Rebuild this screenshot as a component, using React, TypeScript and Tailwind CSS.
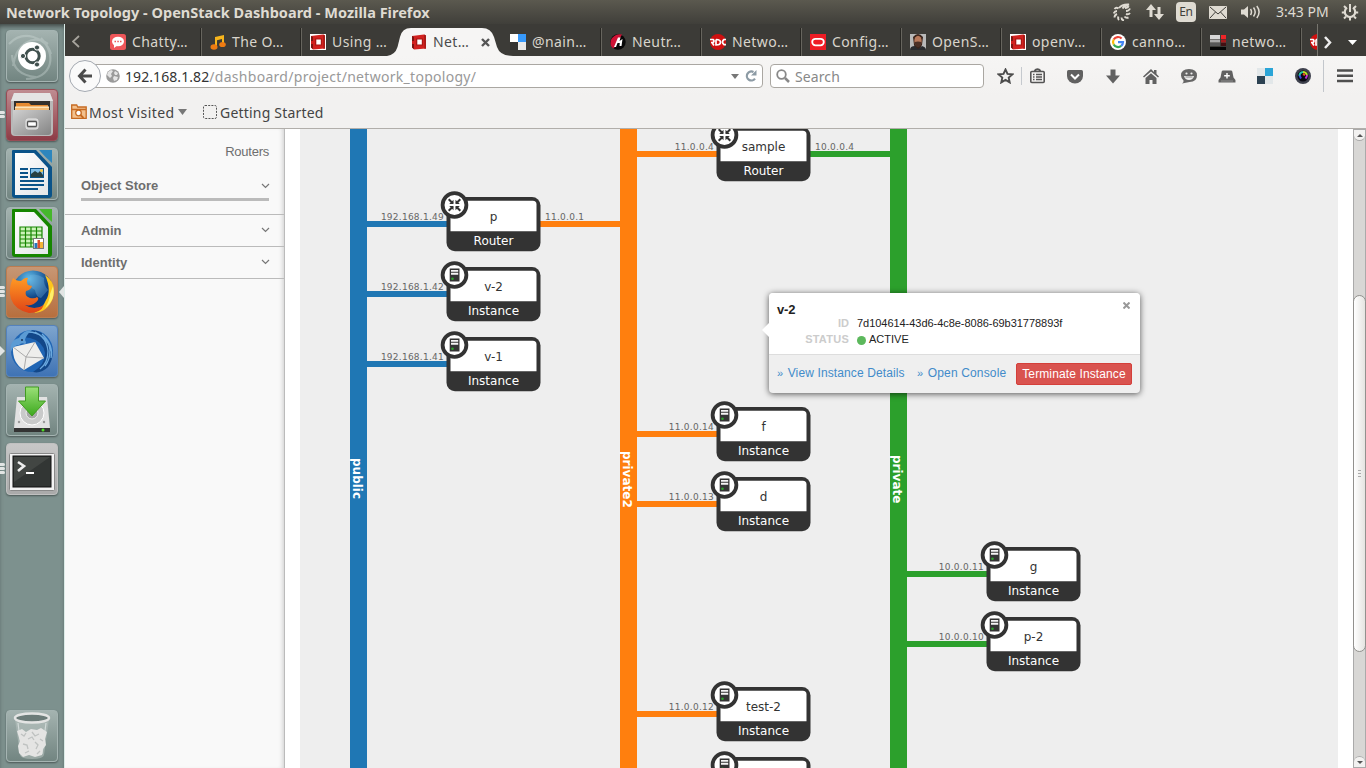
import React from "react";

const ui = "font-['Noto_Sans','Open_Sans',sans-serif]";

/* ---------- top panel ---------- */
function TopPanel() {
  return (
    <header className={`flex h-6 items-center bg-linear-to-b from-[#5b594f] to-[#403f3a] text-[#dfdbd2] ${ui}`}>
      <h1 className="pl-1.5 text-[14.5px] leading-6 font-bold tracking-[0.02px] whitespace-nowrap">Network Topology - OpenStack Dashboard - Mozilla Firefox</h1>
      <svg className="ml-auto" width="18" height="18" viewBox="0 0 18 18" fill="none" stroke="#dfdbd2">
        <g strokeWidth="1.900">
          <path d="M6 5Q9 1 16 1.500Q11 3 9.500 5.500M12 5q3 0 3.500-2M13 8q3 0 4-2.500M13 11q2.500 1 4-1M11.500 13.500q1.500 2 4 1M8.500 14.500q0 2.500 2.500 3M5.500 13.500q-1 2 .5 3.500M4 11q-2.500 1-2.500 3.500M4 8Q1.500 8 .7 10.500M5.500 5.500Q3 4 1.500 6" />
        </g>
      </svg>
      <svg className="ml-[15px]" width="18" height="18" viewBox="0 0 18 18" fill="#dfdbd2">
        <path d="M5 1l5 6H6.500v7h-3V7H0zM13 17l-5-6h3.500V4h3v7H18z" />
      </svg>
      <span className="ml-3 flex h-5 w-5 items-center justify-center rounded-sm bg-[#dfdbd2] text-[12px] tracking-tight text-[#403f3a]">En</span>
      <svg className="ml-[13px]" width="18" height="13" viewBox="0 0 18 13">
        <rect width="18" height="13" rx="1" fill="#dfdbd2" />
        <path d="M1 1l8 7 8-7M1 12l5.500-6M17 12l-5.500-6" stroke="#403f3a" fill="none" />
      </svg>
      <svg className="ml-[13px]" width="21" height="16" viewBox="0 0 21 16" fill="none" stroke="#dfdbd2" strokeWidth="1.500">
        <path d="M1 5.500h3L8 2v12l-4-3.500H1z" fill="#dfdbd2" stroke="none" />
        <path d="M10.500 5q2 3 0 6M13.500 3.500q3.400 4.500 0 9M16.800 2q4.600 6 0 12" />
      </svg>
      <span className="ml-[15px] w-[53px] text-[14px] leading-6 tracking-[0.03px] whitespace-nowrap">3:43 PM</span>
      <svg className="mr-[7px] ml-3" width="18" height="18" viewBox="0 0 18 18" fill="none" stroke="#dfdbd2">
        <path d="M6 4.600A5.200 5.200 0 1 0 12 4.600" strokeWidth="2.200" />
        <path d="M9 1v8" strokeWidth="2" />
        <path d="M3 3l2 2M15 3l-2 2M.8 9.500h2.500M14.700 9.500h2.500M3 15.500l2-2M15 15.500l-2-2M9 15v2.500" strokeWidth="2" />
      </svg>
    </header>
  );
}

/* ---------- launcher ---------- */
const launcherArt: Record<string, React.ReactNode> = {
  ubuntu: (
    <>
      <path d="M7 36C10 15 26 3 42 14M20 49C47 48 51 25 35 8M3 14C17-1 40 7 45 24M6 25q1 20 24 22" fill="none" stroke="#d4dfdd" strokeWidth="2.200" opacity=".35" />
      <circle cx="26" cy="26" r="14" fill="#fff" />
      <circle cx="26.500" cy="26" r="6.700" fill="none" stroke="#40504e" strokeWidth="3" />
      <g fill="#40504e" stroke="#fff" strokeWidth="1"><circle cx="17" cy="26" r="2.600" /><circle cx="31" cy="17.500" r="2.600" /><circle cx="31" cy="34.500" r="2.600" /></g>
    </>
  ),
  files: (
    <>
      <path d="M8 4h36l3 8v31q0 4-4 4H9q-4 0-4-4V12z" fill="#b8b8b8" /><path d="M8 4h36l3 8H5z" fill="#e4e4e4" />
      <path d="M8 12h36v10H8z" fill="#33302d" />
      <path d="M10 14h13l2 2h17v7H10z" fill="#e58a31" /><path d="M9 18h34v4H9z" fill="#f3bb76" /><path d="M9 17.500h34v1.300H9z" fill="#fff1cf" />
      <path d="M7 21h38v22q0 3-3 3H10q-3 0-3-3z" fill="url(#steel)" />
      <rect x="20" y="30" width="12" height="10" rx="2" fill="#c9c9c9" stroke="#e8e8e8" />
      <rect x="21.500" y="32.500" width="9" height="5" rx="1" fill="#fff" stroke="#555" strokeWidth="1.300" />
    </>
  ),
  writer: (
    <>
      <path d="M6 3q0-1 1-1h23l16 17v28q0 3-3 3H9q-3 0-3-3z" fill="#0a5389" />
      <path d="M9 5h19l14 15v27H9z" fill="url(#paper)" />
      <path d="M33 2h13v13q-7-6-13-13z" fill="#2d86bd" />
      <path d="M14 21h8M14 25h8M14 29h8M14 33h24M14 37h24M14 41h18" stroke="#0a5389" strokeWidth="2" />
      <rect x="24.500" y="20.500" width="13" height="9" fill="#80bde6" stroke="#0a5389" /><path d="M25 29v-3l4-3 3 2 2-2 3 4v2z" fill="#263f42" /><circle cx="35.500" cy="22.500" r="1.500" fill="#f6c743" />
    </>
  ),
  calc: (
    <>
      <path d="M6 3q0-1 1-1h23l16 17v28q0 3-3 3H9q-3 0-3-3z" fill="#168600" />
      <path d="M9 5h19l14 15v27H9z" fill="url(#paper)" />
      <path d="M33 2h13v13q-7-6-13-13z" fill="#46b72c" />
      <path d="M14 20h22v20H14z" fill="#cdf3ba" /><path d="M14 20h22v20H14zM14 24h22M14 28h22M14 32h22M14 36h22M19.500 20v20M25 20v20M30.500 20v20" fill="none" stroke="#168600" strokeWidth="1.200" />
      <rect x="27.500" y="31.500" width="10" height="10" fill="#fff" stroke="#777" /><path d="M28.500 36h3v5h-3z" fill="#2776bd" /><path d="M31.500 33h2.500v8h-2.500z" fill="#e1512d" /><path d="M34 35h3v6h-3z" fill="#f3b437" />
    </>
  ),
  firefox: (
    <>
      <circle cx="27" cy="25" r="20.500" fill="url(#globe)" />
      <path d="M24 9q7-2 14 3-1 6 4 12l-7 8q-5-1-6-8-7-2-5-15z" fill="#79b8e0" opacity=".35" />
      <path d="M39 9q12 8 8 23-5 14-19 15 9-5 12-13 6-9-1-25z" fill="#ffc51c" /><path d="M47 20q3 14-8 22 5-8 5-14z" fill="#fff06a" />
      <path d="M7 12q3 3 8 3 4-4 7-3-2 4 0 7l4 1q-1 4-6 5-2 5 4 7 5 1 7-1 2 1 1 3-5 7-13 5 9 6 19 0-3 8-15 8Q9 44 5 33 2 22 7 12z" fill="url(#fox)" />
    </>
  ),
  thunderbird: (
    <>
      <circle cx="26" cy="26" r="21" fill="#1f65b4" />
      <path d="M14 10Q31-1 42 15q9 14 0 27-7 7-15 5 12-7 12-19-2-12-15-15-4 0-10-3z" fill="#124789" />
      <path d="M22 7q18 0 20 19 0 12-8 18M29 7q15 8 15 18t-5 16M36 9q12 11 9 24" stroke="#6ba9df" fill="none" strokeWidth="1.300" />
      <path d="M7 22l22-5 9 16-20 12q-12-7-11-23z" fill="#eeeeec" /><path d="M7 22l13 10 9-15M18 45l2-13 18 1" stroke="#aaa" fill="none" />
      <path d="M5 27Q3 15 13 13q4-8 13-8-6 5-7 10 2 3 0 4-3-2-6 1-6 0-8 7z" fill="#5b9bd4" /><circle cx="16" cy="15" r="1" fill="#152f55" />
    </>
  ),
  installer: (
    <>
      <path d="M11 13h30l3 31v3H8v-3z" fill="#e2e2e2" /><path d="M8 44h36v4H8z" fill="#333" /><circle cx="37" cy="46" r="1.500" fill="#4ddc26" />
      <circle cx="26" cy="29" r="12" fill="#c9caca" stroke="#fff" /><circle cx="26" cy="29" r="6" fill="#a8aaa8" stroke="#eee" />
      <path d="M19.500 3h13v14h7L26 32 12.500 17h7z" fill="url(#green)" stroke="#419b20" />
      <g fill="#999"><circle cx="13" cy="38" r="1.200" /><circle cx="38" cy="38" r="1.200" /></g>
    </>
  ),
  terminal: (
    <>
      <rect x="3.500" y="10.500" width="45" height="37" rx="1" fill="#f3f3f3" stroke="#888" />
      <rect x="7" y="13" width="38" height="31" fill="#323634" stroke="#111" /><path d="M8 14h36L8 39z" fill="#606361" opacity=".35" />
      <path d="M12 19l6 4-6 5" fill="none" stroke="#eee" strokeWidth="2.600" /><path d="M20 30h8" stroke="#fff" strokeWidth="2" />
    </>
  ),
  trash: (
    <>
      <path d="M9 9l5 36q1 4 12 4t12-4l5-36z" fill="#b8c2c0" opacity=".55" /><path d="M12 13l4 31M40 13l-4 31" stroke="#e4ebea" strokeWidth="1.200" opacity=".7" />
      <ellipse cx="26" cy="8" rx="17" ry="4.500" fill="#6c7c79" stroke="#e3e4e3" strokeWidth="2.500" />
      <path d="M11 21l5-2 4 3 5-3 6 1 4-2 6 4-2 7 1 6-3 4-1 6-7 2-6-2-6 2-4-4-1-7 2-5z" fill="#e4e4e3" />
      <path d="M15 24l3 2 2-3M26 22l3 4 4-2M17 34l4 1 1 4M29 32l3 3-2 4M22 29l4-2 2 3M34 29l3 2M19 43l4-2M31 44l3-3" stroke="#bfc2c1" fill="none" strokeWidth="1.300" />
    </>
  ),
};

function Defs() {
  return (
    <svg className="absolute h-0 w-0">
      <defs>
        <linearGradient id="steel" x2="1" y2="1"><stop stopColor="#d0d0d0" /><stop offset="1" stopColor="#848484" /></linearGradient>
        <linearGradient id="paper" x2="1" y2="1"><stop stopColor="#fff" /><stop offset="1" stopColor="#e3e6e8" /></linearGradient>
        <linearGradient id="fox" x2="0" y2="1"><stop stopColor="#ff9a24" /><stop offset="1" stopColor="#df4216" /></linearGradient>
        <linearGradient id="green" x2="0" y2="1"><stop stopColor="#9be078" /><stop offset="1" stopColor="#3ca91d" /></linearGradient>
        <radialGradient id="globe" cx=".4" cy=".2"><stop stopColor="#62bdea" /><stop offset="1" stopColor="#0b3f82" /></radialGradient>
      </defs>
    </svg>
  );
}

const glass = "bg-linear-to-b from-[#a4b3b0] to-[#728581] border-[#a5b4b2]";
const launcher = [
  { id: "ubuntu", cls: glass, pips: 0 },
  { id: "files", cls: "bg-linear-to-b from-[#bf8c91] to-[#8d3b46] border-[#984c55]", pips: 2 },
  { id: "writer", cls: glass, pips: 0 },
  { id: "calc", cls: glass, pips: 0 },
  { id: "firefox", cls: "bg-linear-to-b from-[#c79774] to-[#b76f3e] border-[#bc7c50]", pips: 3 },
  { id: "thunderbird", cls: "bg-linear-to-b from-[#7ea5ce] to-[#3f73b5] border-[#5482bc]", pips: 1 },
  { id: "installer", cls: glass, pips: 0 },
  { id: "terminal", cls: "bg-linear-to-b from-[#c7c7c7] to-[#aaa] border-[#c0c0c0]", pips: 3 },
];

function Tile({ id, cls, pips }: { id: string; cls: string; pips: number }) {
  return (
    <div className="relative pl-1.5">
      <div className={`flex h-[52px] w-[52px] items-center justify-center rounded-[4px] border shadow-[0_1px_2px_rgba(0,0,0,0.4)] ${cls}`}>
        <svg className="shrink-0" width="52" height="52" viewBox="0 0 52 52">{launcherArt[id]}</svg>
      </div>
      {pips > 1 && (
        <div className={`absolute left-0 flex flex-col gap-px ${pips === 3 ? "top-[20px]" : "top-[22px]"}`}>
          {Array.from({ length: pips }, (_, i) => <i key={i} className="block h-[3px] w-[5px] rounded-r-full bg-[#e2e5e4]" />)}
        </div>
      )}
      {pips === 1 && <svg className="absolute top-[21px] left-0" width="5" height="10"><path d="M0 0l5 5-5 5z" fill="#e2e5e4" /></svg>}
      {id === "firefox" && <svg className="absolute top-[20px] left-[59px]" width="5" height="12"><path d="M5 0L0 6l5 6z" fill="#e2e5e4" /></svg>}
    </div>
  );
}

function Launcher() {
  return (
    <nav className="flex w-[65px] shrink-0 flex-col gap-[7px] border-r border-[#dcebe7] bg-[#7d918e] pt-1.5 pb-1.5 shadow-[inset_0_4px_5px_-2px_#3b4341]">
      {launcher.map((t) => <Tile key={t.id} {...t} />)}
      <div className="mt-auto"><Tile id="trash" cls={glass} pips={0} /></div>
    </nav>
  );
}

/* ---------- tabs ---------- */
const redBox = (
  <>
    <path d="M1 2l12-1.500 2 1v13L3 15.500l-2-2z" fill="#d2211f" /><path d="M1 2l2 1v4H1zM1 10h2v5l-2-1.500z" fill="#7d1512" /><path d="M13 .5l2 1v13l-1.500.5z" fill="#a91b18" />
    <path d="M5 4.500h7v7H5z" fill="#a81714" /><path d="M6.300 5.500h4.500v5H6.300z" fill="#fff" />
  </>
);
const favicons: Record<string, React.ReactNode> = {
  chat: <><rect width="16" height="16" rx="2.500" fill="#ee5659" /><ellipse cx="8" cy="7.500" rx="6" ry="4.800" fill="#fff" /><path d="M4 10v4l4-3z" fill="#fff" /><path d="M4.500 7.500h1.500M7.300 7.500h1.500M10 7.500h1.500" stroke="#ee5659" strokeWidth="1.500" /></>,
  music: <><path d="M5 3l9-2v9.500h-2V5L7 6.200V13H5z" fill="#f7b51c" /><ellipse cx="4" cy="13" rx="3.500" ry="2.700" fill="#ee7b12" /><ellipse cx="12.500" cy="10.500" rx="3.300" ry="2.600" fill="#ee7b12" /></>,
  red: <><rect width="16" height="16" fill="#fff" />{redBox}</>,
  redActive: redBox,
  delicious: <><path d="M0 0h8v8H0z" fill="#fff" /><path d="M8 0h8v8H8z" fill="#3799fb" /><path d="M0 8h8v8H0z" fill="#333" /><path d="M8 8h8v8H8z" fill="#e8e8e8" /></>,
  neutron: <><circle cx="8" cy="8" r="7.700" fill="#080808" /><path d="M1 12Q-1 5 5 1.500q4-2 7-1L5 13l-2 1.500z" fill="#cf1235" /><path d="M4 13L8 3.500h2.500l-1 3.500 3-2-1 7H9.500l.3-3L7.500 9 6 13z" fill="#fff" /></>,
  rdo: <><circle cx="8" cy="8" r="8" fill="#cf1010" /><path d="M0 5.500h3q2 1.500 0 3H1M2 8.500l2 3M6 5.500v5.500q4.500 0 4.500-2.700T6 5.500M16 5.500h-2q-3 2.500 0 5.200h2" stroke="#fff" strokeWidth="1.700" fill="none" /></>,
  oracle: <><path d="M0 0h16v16H0z" fill="#ee1c25" /><rect x="2.200" y="4.800" width="11.600" height="6.500" rx="3.250" fill="none" stroke="#fff" strokeWidth="1.800" /></>,
  face: <><path d="M0 0h16v16H0z" fill="#b8b9b9" /><path d="M3 3q5-6 10 0l-1 8-3 5H6l-2-5z" fill="#3a241b" /><ellipse cx="8" cy="7" rx="3.700" ry="5.200" fill="#b7795b" /><path d="M4.500 8Q8 7 11.500 8 11 13 8 13T4.500 8z" fill="#4b3026" /><path d="M0 16q0-4 5-4l3 3 4-3q4 1 4 4z" fill="#292b2e" /></>,
  google: <><circle cx="8" cy="8" r="8" fill="#fff" /><g fill="none" strokeWidth="2.200"><path d="M11.600 4.500A5 5 0 0 0 3.700 5.500" stroke="#ea4335" /><path d="M3.700 5.500a5 5 0 0 0 0 5" stroke="#fbbc05" /><path d="M3.700 10.500a5 5 0 0 0 7.500 1.400" stroke="#34a853" /><path d="M11.200 11.900A5 5 0 0 0 13 8.200H8" stroke="#4285f4" /></g></>,
  bars: <><path d="M0 1h10v4H0z" fill="#d7d7d7" /><path d="M11 1h5v4h-5z" fill="#ef2528" /><path d="M0 5.500h10v3H0z" fill="#aaa" /><path d="M11 5.500h5v3h-5z" fill="#a51b1d" /><path d="M0 9h10v3H0z" fill="#575757" /><path d="M11 9h5v3h-5z" fill="#431013" /><path d="M0 13h16v3H0z" fill="#050505" /></>,
};
const tabs: [string, string][] = [
  ["chat", "Chatty…"], ["music", "The O…"], ["red", "Using …"], ["redActive", "Net…"], ["delicious", "@nain…"], ["neutron", "Neutr…"],
  ["rdo", "Netwo…"], ["oracle", "Config…"], ["face", "OpenS…"], ["red", "openv…"], ["google", "canno…"], ["bars", "netwo…"], ["rdo", ""],
];

function Tabs() {
  return (
    <div className={`flex h-8 bg-[#3c3b37] text-[14px] text-[#d9d5cc] ${ui}`}>
      <div className="flex w-[37px] shrink-0 items-center pt-0.5 pl-[7px]">
        <svg width="8" height="14" fill="none" stroke="#a7a49d" strokeWidth="1.800"><path d="M7 2L1 7.500 7 13" /></svg>
      </div>
      <div className="flex min-w-0 flex-1 overflow-hidden">
        {tabs.map(([icon, label], i) => {
          const active = i === 3;
          const divider = i !== 2 && i !== 3;
          return (
            <div key={i} className={`relative flex h-8 w-[100px] shrink-0 items-center pt-1 pl-2 ${active ? "z-10 pl-[9px] text-[#4b4b4b]" : ""}`}>
              {active && (
                <svg className="absolute top-1 left-[-15px]" width="126" height="28" viewBox="0 0 126 28">
                  <path d="M0 28Q8 27 10.500 19L13 9Q15 0 24 0h71q9 0 12 9l3 10q3 9 16 9z" fill="#f6f5f4" />
                </svg>
              )}
              <svg className="relative shrink-0" width="16" height="16" viewBox="0 0 16 16">{favicons[icon]}</svg>
              <span className="relative -top-px ml-1.5 tracking-[0.4px] whitespace-nowrap">{label}</span>
              {active && <svg className="absolute top-[14px] left-[79px]" width="9" height="9" stroke="#555" strokeWidth="2.400"><path d="M1 1l7 7M8 1L1 8" /></svg>}
              {divider && <i className="absolute right-0 bottom-0 h-7 w-[2px] border-l border-[#272622] bg-[#67655e]" />}
            </div>
          );
        })}
      </div>
      <div className="flex w-[49px] shrink-0 items-center border-l border-[#77756e] pt-1 pl-[6px]">
        <svg width="8" height="13" fill="none" stroke="#eee" strokeWidth="2.500"><path d="M1 1l5 5.500L1 12" /></svg>
        <svg className="ml-4" width="9" height="5"><path d="M0 0h9L4.500 5z" fill="#fff" /></svg>
      </div>
    </div>
  );
}

/* ---------- navigation ---------- */
const tool = "flex w-[38px] shrink-0 justify-center";

function NavBar() {
  return (
    <div className={`flex h-10 items-center bg-linear-to-b from-[#f6f5f4] to-[#f2f1f0] ${ui}`}>
      <div className="z-10 ml-1 flex h-8 w-8 shrink-0 items-center justify-center rounded-full border border-[#a4a9b1] bg-[#fafafa]">
        <svg width="16" height="16" fill="none" stroke="#4c4c4c" strokeWidth="3"><path d="M8.500 1.500L2.500 8l6 6.500M3 8h12" /></svg>
      </div>
      <div className="-ml-4 flex h-6 w-[678px] shrink-0 items-center rounded-sm border border-[#aaa7a2] bg-white pl-5">
        <svg width="14" height="14" viewBox="0 0 14 14"><circle cx="7" cy="7" r="6.800" fill="#9a9a9a" /><path d="M2 3l3-2 2 1-2 3 1 2-2 2-2-2-1-1zM9 2l3 2-1 2H9L8 4zM8 7l4 1-1 3-3 1-1-3z" fill="#e4e4e4" /></svg>
        <span className="ml-[5px] text-[14px] tracking-[0.29px] whitespace-nowrap text-[#999]"><b className="font-normal tracking-[0.08px] text-[#333]">192.168.1.82</b>/dashboard/project/network_topology/</span>
        <svg className="ml-auto" width="8" height="5"><path d="M0 0h8L4 5z" fill="#777" /></svg>
        <svg className="mr-[5px] ml-1.5" width="12" height="12" viewBox="0 0 12 12"><path d="M10 8.700A4.500 4.500 0 1 1 8.500 2" fill="none" stroke="#8d9ba5" strokeWidth="2.200" /><path d="M11.500 0v5.500H6z" fill="#8d9ba5" /></svg>
      </div>
      <div className="ml-[7px] flex h-6 w-[214px] shrink-0 items-center rounded-sm border border-[#aaa7a2] bg-white pl-[5px]">
        <svg width="14" height="14" fill="none" stroke="#888"><circle cx="5.500" cy="5.500" r="4.300" strokeWidth="1.800" /><path d="M9 9l4 4" strokeWidth="2.500" /></svg>
        <span className="ml-[5px] text-[14px] tracking-[0.1px] text-[#888]">Search</span>
      </div>
      <div className="flex w-[37px] shrink-0 items-center pl-[13px]">
        <svg width="17" height="16" viewBox="0 0 17 16"><path d="M8.500 1.500l2 4.400 4.800.5-3.600 3.200 1 4.800-4.200-2.500-4.200 2.500 1-4.800-3.600-3.200 4.800-.5z" fill="none" stroke="#4c4c4c" strokeWidth="1.900" /></svg>
      </div>
      <div className="h-[18px] w-px shrink-0 bg-[#c5c9ce]" />
      <div className="flex w-[34px] shrink-0 pl-2">
        <svg width="15" height="16" fill="none" stroke="#555"><path d="M4.500 3q3-3.500 6 0" strokeWidth="2" /><rect x=".8" y="3.500" width="13.400" height="11" rx="1" strokeWidth="1.600" /><path d="M3 6.500h1.500M3 9h1.500M3 11.500h1.500M6 6.500H12M6 9H12M6 11.500H12" strokeWidth="1.400" /></svg>
      </div>
      <div className={tool}><svg width="16" height="15"><path d="M1.500 1h13Q16 1 16 2.500V7a8 7.500 0 0 1-16 0V2.500Q0 1 1.500 1z" fill="#616161" /><path d="M4 5.500l4 4 4-4" fill="none" stroke="#fff" strokeWidth="2" /></svg></div>
      <div className={tool}><svg width="14" height="15"><path d="M4.500 0.500h5v6H14l-7 8-7-8h4.500z" fill="#616161" /></svg></div>
      <div className={tool}><svg width="16" height="15" fill="#616161"><path d="M0 7.500L8 0l3 3V1h2.500v4L16 7.500l-1 1L8 2.500 1 8.500z" /><path d="M2.500 9L8 4.200 13.500 9v6H9.500v-4h-3v4h-4z" /></svg></div>
      <div className={tool}><svg width="16" height="16"><path d="M8 1q8 0 8 6.500T8.500 14L1 15.500q2-1 1.500-3Q0 10 0 7.500 0 1 8 1z" fill="#666" /><circle cx="5.500" cy="5.500" r="1.100" fill="#eee" /><circle cx="10.500" cy="5.500" r="1.100" fill="#eee" /><path d="M3 8h10q-1 4-5 4T3 8z" fill="#eee" /><path d="M4.500 9h7" stroke="#777" strokeWidth=".8" /></svg></div>
      <div className={tool}><svg width="18" height="13"><path d="M5 .5h8q1 0 1.300 1L15.500 7.500q2.500 2 2 5H.5q-.5-3 2-5L3.700 1.500Q4 .5 5 .5z" fill="#616161" /><path d="M9 3v5.500M6.200 5.700h5.600" stroke="#fff" strokeWidth="1.400" /><path d="M3 11h12" stroke="#999" strokeWidth=".8" /></svg></div>
      <div className={tool}><svg width="16" height="16"><path d="M0 0h8v8H0zM8 8h8v8H8z" fill="#e2e7e9" /><path d="M8 0h8v8H8z" fill="#2ba5d7" /><path d="M0 8h8v8H0z" fill="#2c4252" /></svg></div>
      <div className={tool}><svg width="16" height="16" fill="none" strokeWidth="2"><circle cx="8" cy="8" r="8" fill="#3e414d" stroke="none" /><circle cx="8" cy="8" r="5.500" fill="#080812" stroke="none" /><path d="M4.500 8q0-3.500 3.500-4" stroke="#23c5a1" /><path d="M8 4q3 0 4 3" stroke="#b6df25" /><path d="M12 7q0 2-1.500 3.500" stroke="#c133d4" /><path d="M4.500 7.500l1.500 3" stroke="#3845de" /><path d="M8 6l2 1" stroke="#f2482b" /></svg></div>
      <div className="ml-px h-8 w-px shrink-0 bg-[#c3c7cc]" />
      <svg className="ml-[13px] shrink-0" width="16" height="14" stroke="#4f4f4f" strokeWidth="2.400"><path d="M0 1.500h16M0 6.700h16M0 12h16" /></svg>
    </div>
  );
}

function Bookmarks() {
  return (
    <div className={`flex h-[33px] items-center border-b border-[#b1aeaa] bg-[#f2f1f0] pl-1.5 text-[14px] text-[#444] ${ui}`}>
      <svg width="16" height="16" fill="none" stroke="#c66a21"><path d="M.7 14.300V1h5l1 2h8.500v11.300zM.7 5.500H15" fill="#f3c18d" strokeWidth="1.300" /><circle cx="7.500" cy="9" r="2.800" fill="#fff" strokeWidth="1.300" /><path d="M9.500 11l3 3" strokeWidth="1.800" /></svg>
      <span className="ml-0.5 w-[86px] tracking-[0.43px] whitespace-nowrap">Most Visited</span>
      <svg className="ml-[3px]" width="9" height="6"><path d="M0 0h9L4.500 6z" fill="#777" /></svg>
      <svg className="ml-4" width="14" height="14"><rect x=".5" y=".5" width="13" height="13" rx="1.500" fill="none" stroke="#555" strokeDasharray="2 1.200" /></svg>
      <span className="ml-[3px] tracking-[0.2px] whitespace-nowrap">Getting Started</span>
    </div>
  );
}

/* ---------- sidebar ---------- */
const Chevron = () => <svg className="-mr-px mb-px" width="9" height="6" fill="none" stroke="#777" strokeWidth="1.200"><path d="M1 1l3.500 3.500L8 1" /></svg>;

function Sidebar() {
  return (
    <aside className="flex w-[220px] shrink-0 flex-col border-r border-[#bbb] bg-[#f9f9f9] font-['Liberation_Sans',sans-serif] text-[13px] text-[#6e6e6e] shadow-[inset_-4px_0_5px_-3px_rgba(0,0,0,0.18)]">
      <div className="flex h-[45px] items-center justify-end pt-px pr-[15px] tracking-[-0.25px]">Routers</div>
      <div className="mr-[15px] ml-4 flex h-[27px] items-center justify-between border-b-3 border-[#bbb]">
        <b>Object Store</b><Chevron />
      </div>
      <div className="mt-[13px] flex h-8 items-center justify-between border-t border-[#bbb] pr-[15px] pl-4"><b>Admin</b><Chevron /></div>
      <div className="flex h-[33px] items-center justify-between border-y border-[#bbb] pr-[15px] pl-4"><b>Identity</b><Chevron /></div>
    </aside>
  );
}

/* ---------- topology ---------- */
const colors = { blue: "bg-[#1f77b4]", orange: "bg-[#ff7f0e]", green: "bg-[#2ca02c]" };
type Net = keyof typeof colors;
type NodeT = { name: string; router?: boolean; x: number; y: number; net: Net; ip: string; rnet?: Net; rip?: string };

const networks: { name: string; x: number; net: Net }[] = [
  { name: "public", x: 50, net: "blue" },
  { name: "private2", x: 320, net: "orange" },
  { name: "private", x: 590, net: "green" },
];
const nodes: NodeT[] = [
  { name: "sample", router: true, x: 337, y: -2, net: "orange", ip: "11.0.0.4", rnet: "green", rip: "10.0.0.4" },
  { name: "p", router: true, x: 67, y: 68, net: "blue", ip: "192.168.1.49", rnet: "orange", rip: "11.0.0.1" },
  { name: "v-2", x: 67, y: 138, net: "blue", ip: "192.168.1.42" },
  { name: "v-1", x: 67, y: 208, net: "blue", ip: "192.168.1.41" },
  { name: "f", x: 337, y: 278, net: "orange", ip: "11.0.0.14" },
  { name: "d", x: 337, y: 348, net: "orange", ip: "11.0.0.13" },
  { name: "g", x: 607, y: 418, net: "green", ip: "10.0.0.11" },
  { name: "p-2", x: 607, y: 488, net: "green", ip: "10.0.0.10" },
  { name: "test-2", x: 337, y: 558, net: "orange", ip: "11.0.0.12" },
  { name: "", x: 337, y: 628, net: "orange", ip: "" },
];

function NodeFrame({ router }: { router?: boolean }) {
  return (
    <svg className="absolute top-[-7px] left-[-7px]" width="104" height="64" viewBox="0 0 104 64">
      <rect x="6.500" y="7" width="94" height="54.200" rx="8.500" fill="#333" />
      <path d="M10.500 41.300V14.500q0-3.700 3.700-3.700h78.600q3.700 0 3.700 3.700v26.800z" fill="#fff" />
      <circle cx="14.500" cy="15" r="11.900" fill="#fff" stroke="#333" strokeWidth="3.800" />
      {router ? (
        <g fill="#333" stroke="#333">
          <path d="M8.700 9.200l4 4M20.300 9.200l-4 4M8.700 20.800l4-4M20.300 20.800l-4-4" strokeWidth="2" />
          <path d="M13.500 9.700V14H9.200zM15.500 9.700V14h4.300zM13.500 20.300V16H9.200zM15.500 20.300V16h4.300z" stroke="none" transform="rotate(0 14.500 15)" />
        </g>
      ) : (
        <>
          <path d="M9.700 8.500h9.800v13H9.700z" fill="#333" />
          <path d="M11 10h7.200v1.700H11zM11 12.800h7.200v1.900H11z" fill="#f4f4f4" />
          <circle cx="12.500" cy="18.700" r="1.300" fill="#2ca02c" />
        </>
      )}
    </svg>
  );
}

function TopologyNode({ n }: { n: NodeT }) {
  return (
    <div className="absolute flex" style={{ left: n.x, top: n.y }}>
      <div className="w-20 pt-[14px]">
        <div className="h-[10px] pr-[3px] text-right text-[9px] leading-[13px] tracking-[0.25px] text-[#666]">{n.ip}</div>
        <div className={`h-1.5 ${colors[n.net]}`} />
      </div>
      <div className="relative flex h-[54px] w-[94px] flex-col pt-1 text-center text-[12px]">
        <NodeFrame router={n.router} />
        {n.name && (
          <>
            <div className="relative h-[30px] pr-px leading-[32px] text-[#333]">{n.name}</div>
            <div className="relative pr-px leading-[20px] text-white">{n.router ? "Router" : "Instance"}</div>
          </>
        )}
      </div>
      {n.rnet && (
        <div className="-ml-px w-20 pt-[14px]">
          <div className="h-[10px] pl-[5px] text-[9px] leading-[13px] tracking-[0.25px] text-[#666]">{n.rip}</div>
          <div className={`h-1.5 ${colors[n.rnet]}`} />
        </div>
      )}
    </div>
  );
}

function Popup() {
  return (
    <div className="absolute top-[164px] left-[469px] flex h-[100px] w-[371px] flex-col rounded-[4px] bg-[#efefef] font-['Liberation_Sans',sans-serif] shadow-[0_1px_6px_rgba(0,0,0,0.65)]">
      <svg className="absolute top-[29px] left-[-7px]" width="8" height="16"><path d="M8 0L0 8l8 8z" fill="#fff" /></svg>
      <div className="flex h-[62px] flex-col rounded-t-[4px] border-b border-[#ddd] bg-white pt-[9px] pl-2 text-[11px] text-[#222]">
        <div className="flex h-[13px] items-center justify-between pr-[10px]">
          <b className="pt-[3px] text-[13px] tracking-[-0.2px]">v-2</b>
          <svg className="-mt-1.5" width="7" height="7" stroke="#999" strokeWidth="2"><path d="M.5.5l6 6M6.500.5l-6 6" /></svg>
        </div>
        <div className="flex h-4 items-center"><b className="w-[72px] text-right text-[#ccc]">ID</b><span className="ml-2 tracking-[-0.040px]">7d104614-43d6-4c8e-8086-69b31778893f</span></div>
        <div className="flex h-4 items-center"><b className="w-[72px] text-right tracking-[0.25px] text-[#ccc]">STATUS</b><i className="mt-[3px] ml-2 h-[9px] w-[9px] rounded-full bg-[#5cb85c]" /><span className="ml-[3px]">ACTIVE</span></div>
      </div>
      <div className="flex flex-1 items-center pr-2 pl-2 text-[12px] text-[#428bca]">
        <span className="-mt-0.5 w-[140px] tracking-[0.12px] whitespace-nowrap"><small className="mr-px text-[11px]">»</small> View Instance Details</span>
        <span className="-mt-0.5 tracking-[0.15px] whitespace-nowrap"><small className="mr-px text-[11px]">»</small> Open Console</span>
        <button className="ml-auto flex h-[22px] w-[116px] items-center justify-center rounded-[2px] border border-[#d43f3a] bg-[#d9534f] pb-px text-[12px] tracking-[0.12px] whitespace-nowrap text-white">Terminate Instance</button>
      </div>
    </div>
  );
}

function Topology() {
  return (
    <section className="relative mx-[15px] flex-1 overflow-hidden bg-[#eee] font-['DejaVu_Sans',sans-serif]">
      {networks.map((n) => (
        <div key={n.name} className={`absolute top-0 bottom-0 w-[17px] ${colors[n.net]}`} style={{ left: n.x }}>
          <div className="mt-[300px] flex h-[100px] w-[13px] items-center justify-center text-[12px] leading-[13px] font-bold whitespace-nowrap text-white [writing-mode:vertical-rl]">{n.name}</div>
        </div>
      ))}
      {nodes.map((n) => <TopologyNode key={n.y} n={n} />)}
      <Popup />
    </section>
  );
}

function Scrollbar() {
  return (
    <div className="flex w-[13px] shrink-0 flex-col border border-[#aaa] bg-[#d8d7d5]">
      <div className="flex h-[11px] items-center justify-center rounded-b-[6px] border-b border-[#aaa] bg-[#f2f1f0]"><svg width="6" height="3"><path d="M0 3l3-3 3 3z" fill="#555" /></svg></div>
      <div className="-mx-px mt-[154px] flex h-[357px] flex-col items-center justify-center gap-[2px] rounded-[7px] border border-[#92918e] bg-linear-to-r from-white to-[#e5e4e1]">
        <i className="h-px w-[3px] bg-[#aaa]" /><i className="h-px w-[3px] bg-[#aaa]" /><i className="h-px w-[3px] bg-[#aaa]" />
      </div>
      <div className="mt-auto flex h-[11px] items-center justify-center rounded-t-[6px] border-t border-[#aaa] bg-[#f2f1f0]"><svg width="6" height="3"><path d="M0 0l3 3 3-3z" fill="#555" /></svg></div>
    </div>
  );
}

export default function App() {
  return (
    <div className="flex h-[768px] w-[1366px] flex-col overflow-hidden bg-white">
      <Defs />
      <TopPanel />
      <div className="flex min-h-0 flex-1">
        <Launcher />
        <div className="flex min-w-0 flex-1 flex-col">
          <Tabs />
          <NavBar />
          <Bookmarks />
          <main className="flex min-h-0 flex-1">
            <Sidebar />
            <Topology />
            <Scrollbar />
          </main>
        </div>
      </div>
    </div>
  );
}
